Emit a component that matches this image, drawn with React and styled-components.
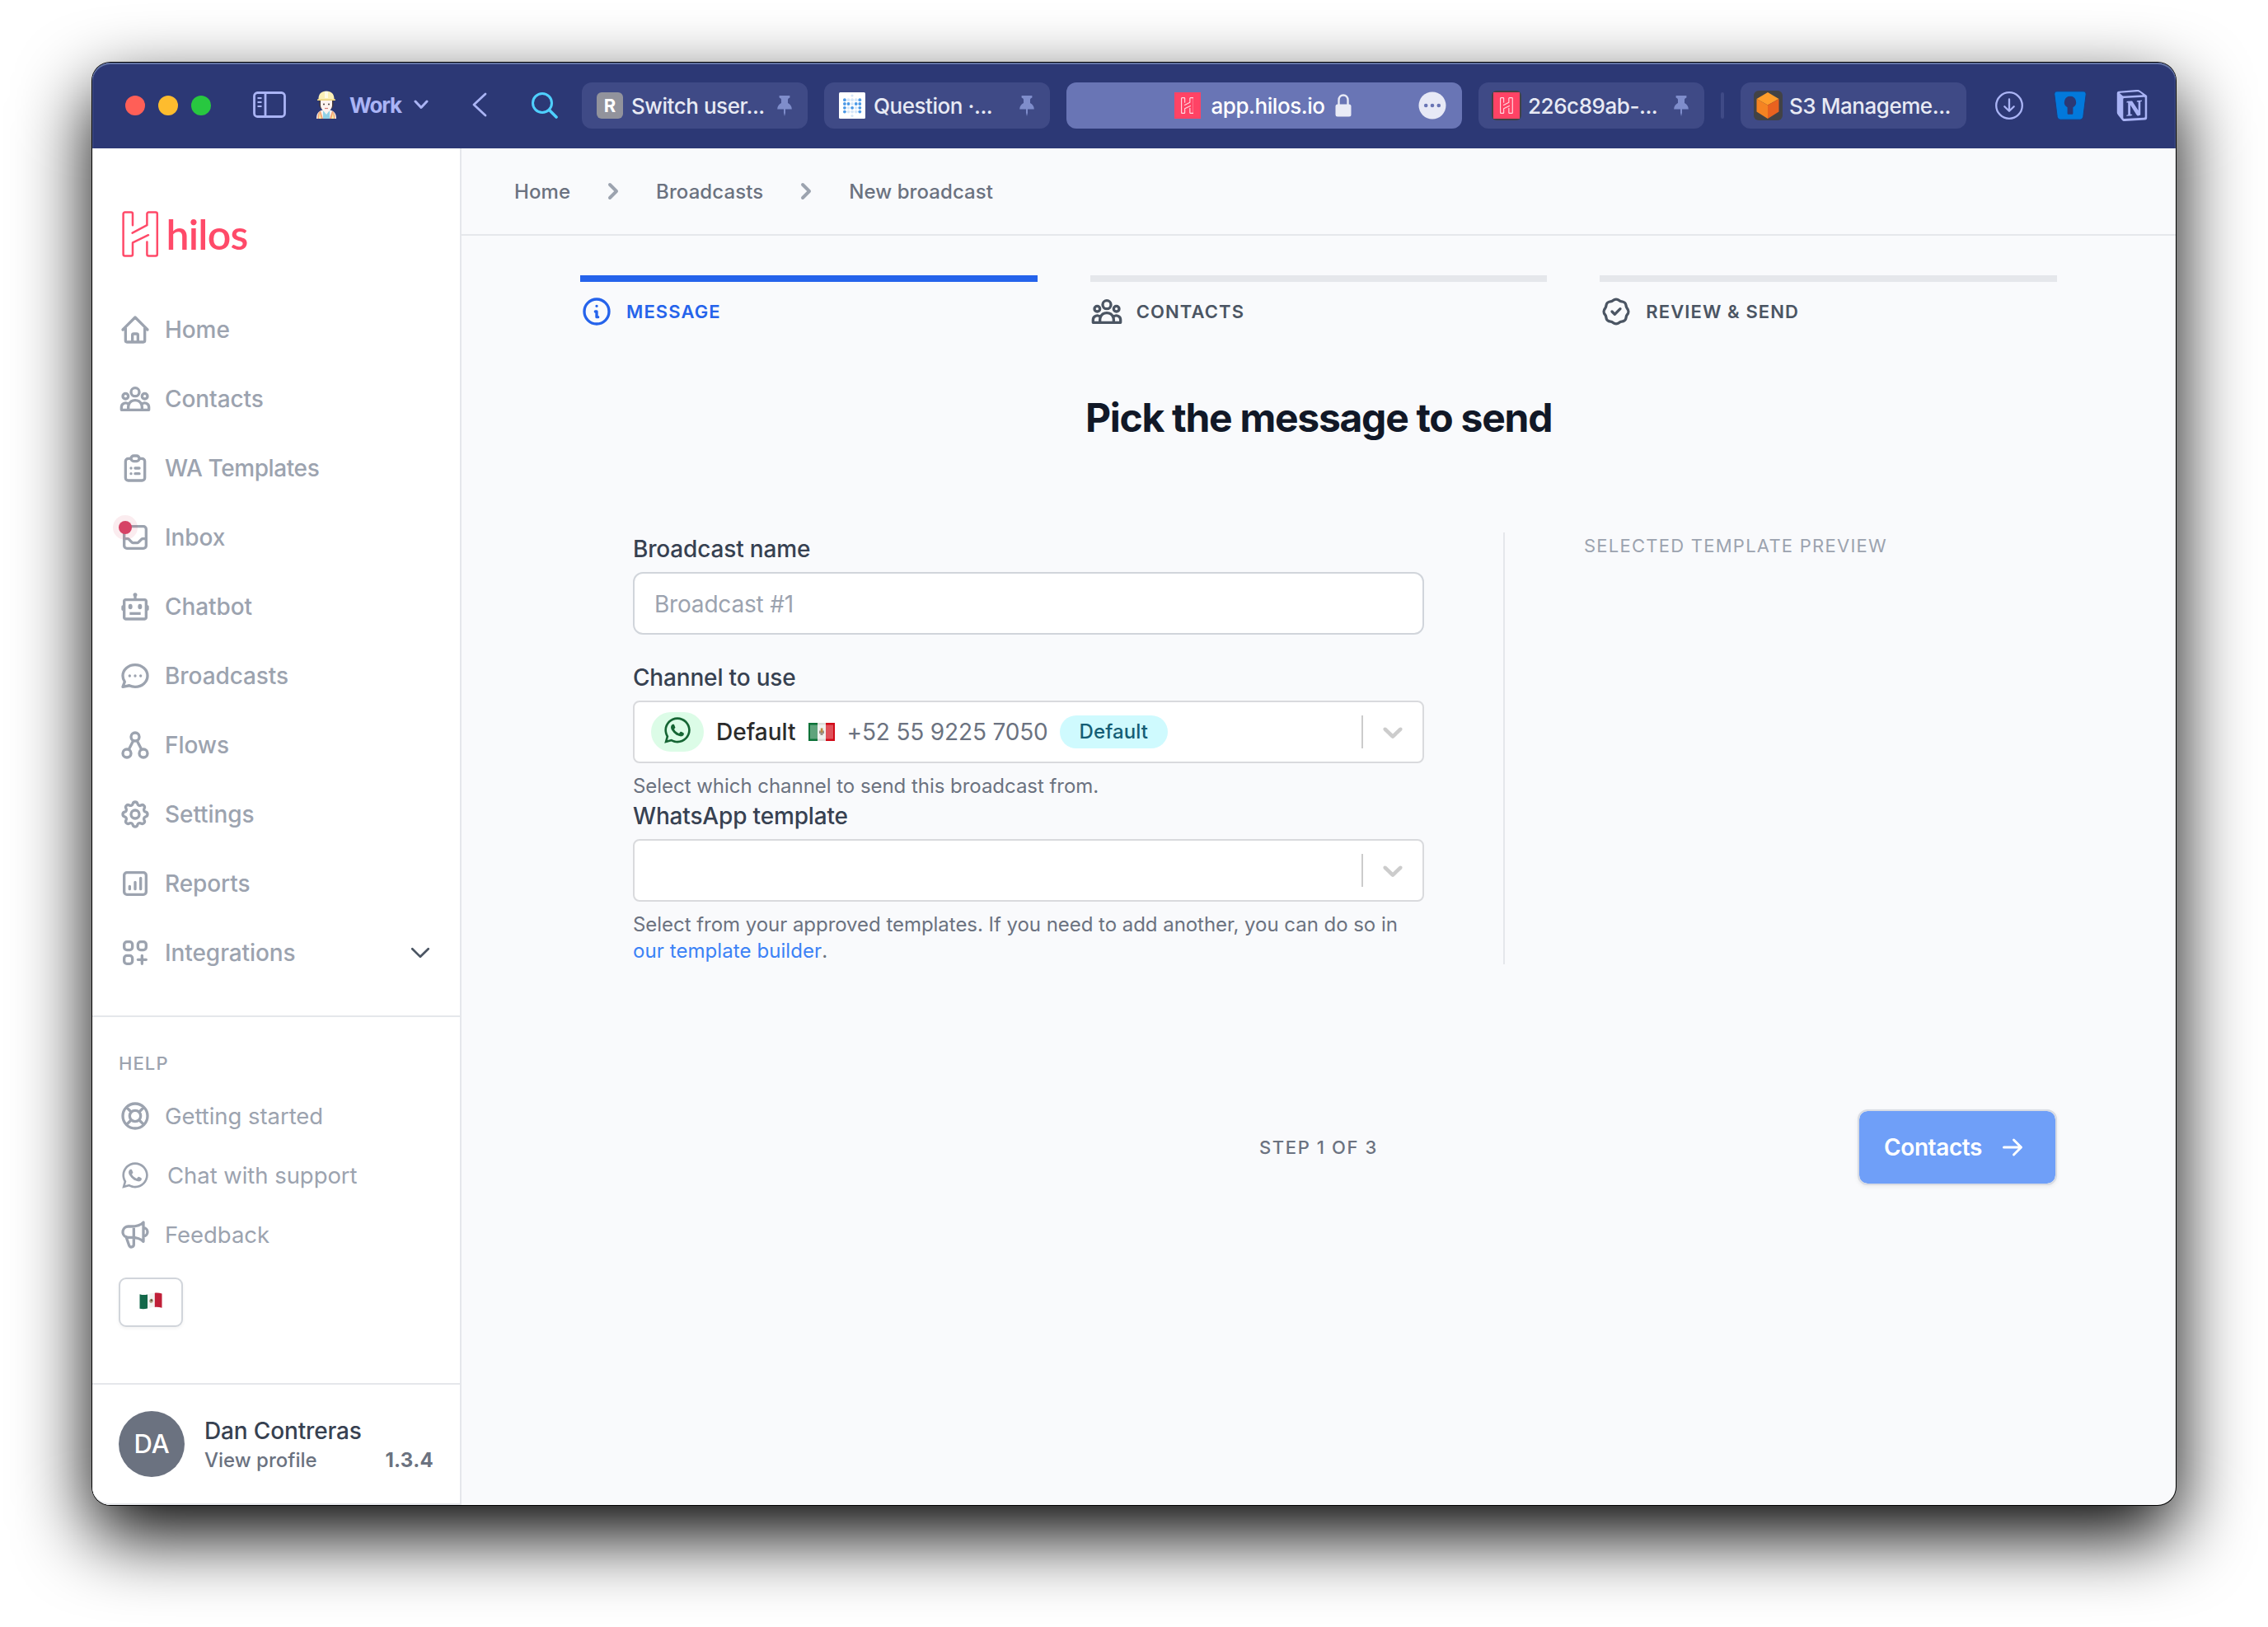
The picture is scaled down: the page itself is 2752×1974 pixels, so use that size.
import React from 'react';
import styled, { createGlobalStyle } from 'styled-components';
import {
  HiOutlineHome, HiOutlineUserGroup, HiOutlineClipboardList, HiOutlineInbox, HiOutlineChat,
  HiOutlineCog, HiOutlineChartSquareBar, HiOutlineViewGridAdd, HiOutlineSupport,
  HiOutlineSpeakerphone, HiOutlineInformationCircle, HiOutlineBadgeCheck,
  HiChevronRight, HiArrowRight,
} from 'react-icons/hi';
import { BiBot } from 'react-icons/bi';
import { FaWhatsapp } from 'react-icons/fa';
import { SiNotion } from 'react-icons/si';


/* ---------- icons ---------- */

const HilosMark = ({ stroke = 2.5, ...rest }) => (
  <svg viewBox="0 0 44.5 56" fill="none" stroke="currentColor" strokeWidth={stroke} strokeLinecap="round" strokeLinejoin="round" {...rest}>
    <path d="M13 17.2V3.6a2 2 0 0 0-2-2H3.6a2 2 0 0 0-2 2v48.8a2 2 0 0 0 2 2H11a2 2 0 0 0 2-2V38.4l19-9.2" />
    <path d="M30.4 37.4v15a2 2 0 0 0 2 2h8.4a2 2 0 0 0 2-2V3.6a2 2 0 0 0-2-2h-8.4a2 2 0 0 0-2 2v13.6L12.6 26.6" />
  </svg>
);

const FlowsIcon = () => (
  <svg width="1em" height="1em" viewBox="0 0 24 24" fill="none" stroke="currentColor" strokeWidth="2">
    <circle cx="12" cy="6" r="3" />
    <circle cx="6" cy="18" r="3" />
    <circle cx="18" cy="18" r="3" />
    <path d="M10.6 8.8L7.4 15.2M13.4 8.8l3.2 6.4" />
  </svg>
);

const Pin = () => (
  <svg width="18" height="25" viewBox="0 0 18 25" fill="#7f8dcb">
    <path d="M2.6 0h12.8v2.4c-1.4.6-2.4 1.2-2.4 2.6v4c2.8 1.4 4.8 4 4.8 7.4H.2C.2 13 2.2 10.4 5 9V5c0-1.400-1-2-2.400-2.600z" />
    <path d="M8 16h2v5l-1 4-1-4z" />
  </svg>
);

const SidebarIcon = () => (
  <svg width="40" height="32" viewBox="0 0 40 32" fill="none" stroke="#aab4f5" strokeWidth="2.8">
    <rect x="1.500" y="1.500" width="37" height="29" rx="4" />
    <path d="M15 1.500v29" />
    <path d="M5.500 8h5M5.500 13h5M5.500 18h5" strokeWidth="2" />
  </svg>
);

const Worker = () => (
  <svg width="26" height="34" viewBox="0 0 26 34">
    <path d="M1 34c0-7 3-11 12-11s12 4 12 11z" fill="#f4f1ee" />
    <path d="M2.500 34c0-5 .8-8 3.500-9.500l3 9.500zM23.500 34c0-5-.8-8-3.500-9.500L17 34z" fill="#f5a376" />
    <path d="M4 34l.8-8 2 8zM22 34l-.8-8-2 8z" fill="#f9efa0" />
    <path d="M9 24l4 5 4-5v10H9z" fill="#8fd0e6" />
    <path d="M4.500 11h17v6c0 2-1 4-2.500 5H7c-1.500-1-2.500-3-2.500-5z" fill="#493a38" />
    <path d="M6 11h14v6.500c0 4.500-3.500 8-7 8s-7-3.500-7-8z" fill="#fdf3f0" />
    <circle cx="10" cy="16.500" r="1" fill="#4a3b38" />
    <circle cx="16" cy="16.500" r="1" fill="#4a3b38" />
    <path d="M11 21.500h4" stroke="#d77d76" strokeWidth="1.200" />
    <path d="M3.500 10C3.500 4 7 .5 13 .5S22.500 4 22.500 10l1.500 2H2z" fill="#fbefb6" />
    <path d="M11 1h4v8h-4z" fill="#fffbe6" />
    <path d="M2 11.200h22" stroke="#ecd27c" strokeWidth="1.600" />
  </svg>
);

const dots = [
  [1, 0, 0, 0, 1],
  [1, 1, 0, 1, 1],
  [1, 0, 1, 0, 1],
  [1, 0, 0, 0, 1],
];

const MetabaseIcon = () => (
  <svg width="32" height="32" viewBox="0 0 32 32">
    <rect width="32" height="32" rx="1.500" fill="#fff" />
    <circle cx="16" cy="4" r="1.600" fill="#d5e6f8" />
    <circle cx="16" cy="28.500" r="1.600" fill="#d5e6f8" />
    {dots.map((row, y) => row.map((on, x) => (
      <circle key={`${x}${y}`} cx={6.9 + x * 4.6} cy={9.2 + y * 4.8} r="1.900" fill={on ? '#4c99e6' : '#d5e6f8'} />
    )))}
  </svg>
);

const CubeIcon = () => (
  <svg width="28" height="32" viewBox="0 0 28 32">
    <path d="M14 0l13.500 8L14 15.500.5 8z" fill="#ff9d2b" />
    <path d="M.5 8L14 15.500V32L.5 23.500z" fill="#f58322" />
    <path d="M27.500 8L14 15.500V32l13.500-8.500z" fill="#e9621f" />
  </svg>
);

const Lock = () => (
  <svg width="20" height="28" viewBox="0 0 20 28">
    <path d="M4.500 13V7.500C4.500 3.800 6.800 1.500 10 1.500s5.500 2.300 5.500 6V13" fill="none" stroke="#e9ebf6" strokeWidth="2.400" />
    <rect x=".5" y="12.500" width="19" height="15" rx="2.500" fill="#e9ebf6" />
  </svg>
);

const MoreIcon = () => (
  <svg width="34" height="34" viewBox="0 0 34 34">
    <circle cx="17" cy="17" r="16.500" fill="#e7e9f6" />
    <circle cx="9.200" cy="17" r="2.300" fill="#6975b5" />
    <circle cx="17" cy="17" r="2.300" fill="#6975b5" />
    <circle cx="24.800" cy="17" r="2.300" fill="#6975b5" />
  </svg>
);

const DownloadIcon = () => (
  <svg width="34" height="34" viewBox="0 0 34 34" fill="none" stroke="#aab4f5" strokeWidth="2.300" strokeLinecap="round" strokeLinejoin="round">
    <circle cx="17" cy="17" r="15.800" />
    <path d="M17 9.500v14M11.300 18.200l5.700 5.600 5.700-5.600" />
  </svg>
);

const VaultIcon = () => (
  <svg width="40" height="36" viewBox="0 0 40 36">
    <path d="M4 .8h32c2 0 3.400 1.600 3.200 3.600l-3.400 27c-.3 2.200-2 3.800-4.200 3.800H8.400c-2.200 0-3.900-1.600-4.200-3.800L.8 4.400C.6 2.400 2 .8 4 .8z" fill="#0279dc" stroke="#1f3b7c" />
    <path d="M20 6.800a7.200 7.200 0 0 1 3.400 13.500v7.200c0 .8-.5 1.300-1.300 1.300h-4.200c-.8 0-1.300-.5-1.300-1.300v-7.200A7.200 7.200 0 0 1 20 6.800z" fill="#2c3875" />
  </svg>
);

const MexicoFlag = () => (
  <svg width="28" height="21" viewBox="0 0 28 21">
    <path d="M.5 2.200c3.500 1 6 1.200 9.500.2v17c-3.500 1-6 1-9.500.4z" fill="#13684a" />
    <path d="M10 2.400C13 1.500 15.500.8 18.800.7v17.200c-3.300 0-5.800.7-8.800 1.500z" fill="#f3f3f2" />
    <path d="M18.800.7c3.200-.3 5.700 0 8.700.8v17.300c-3-.9-5.500-1.100-8.700-.9z" fill="#c01f38" />
    <path d="M12.200 10.500c.2-2 1.800-3.300 3.600-2.600 1.400.8 1.300 3.600-.2 4.600-1.400.7-3.200.2-3.400-2z" fill="#a89a78" />
    <circle cx="14.800" cy="9.500" r="1.100" fill="#4d3b25" />
  </svg>
);

const FlatFlag = () => (
  <svg width="34" height="24" viewBox="0 0 34 24">
    <path d="M1 1h11v22H1z" fill="#0d7238" />
    <path d="M3 3.500h9v17H3z" fill="#5fa37c" />
    <path d="M12 1h10v22H12z" fill="#dcdcda" />
    <path d="M12 3.500h10v17H12z" fill="#f0f0ee" />
    <path d="M22 1h11v22H22z" fill="#d10a18" />
    <path d="M22 3.500h9v17h-9z" fill="#e0515a" />
    <path d="M14 10.500h6v3.500h-1.500V16h-3v-2H14z" fill="#9b8f86" />
    <path d="M15.800 7.500h2.600v5h-2.600z" fill="#b98a3d" />
  </svg>
);

const SelectChevron = () => (
  <svg width="40" height="40" viewBox="0 0 20 20" fill="#ccc">
    <path d="M4.516 7.548c0.436-0.446 1.043-0.481 1.576 0l3.908 3.747 3.908-3.747c0.533-0.481 1.141-0.446 1.574 0 0.436 0.445 0.408 1.197 0 1.615-0.406 0.418-4.695 4.502-4.695 4.502-0.217 0.223-0.502 0.335-0.787 0.335s-0.570-0.112-0.789-0.335c0 0-4.287-4.084-4.695-4.502s-0.436-1.170 0-1.615z" />
  </svg>
);


/* ---------- data ---------- */

const navItems = [
  { label: 'Home', icon: HiOutlineHome },
  { label: 'Contacts', icon: HiOutlineUserGroup },
  { label: 'WA Templates', icon: HiOutlineClipboardList, tight: true },
  { label: 'Inbox', icon: HiOutlineInbox, unread: true },
  { label: 'Chatbot', icon: BiBot },
  { label: 'Broadcasts', icon: HiOutlineChat },
  { label: 'Flows', icon: FlowsIcon },
  { label: 'Settings', icon: HiOutlineCog },
  { label: 'Reports', icon: HiOutlineChartSquareBar },
  { label: 'Integrations', icon: HiOutlineViewGridAdd, open: true },
];

const steps = [
  { label: 'Message', icon: HiOutlineInformationCircle, active: true },
  { label: 'Contacts', icon: HiOutlineUserGroup },
  { label: 'Review & Send', icon: HiOutlineBadgeCheck },
];


const App = () => {
  return (
    <Desktop>
      <GlobalStyle />
      <Window>
        <Toolbar>
          <Lights>
            <Light color="#ff5f57" />
            <Light color="#febc2e" />
            <Light color="#28c840" />
          </Lights>
          <SidebarToggle><SidebarIcon /></SidebarToggle>
          <Workspace>
            <Worker />
            <span>Work</span>
            <svg width="18" height="12" viewBox="0 0 18 12" fill="none" stroke="#aab4f5" strokeWidth="3" strokeLinecap="round" strokeLinejoin="round">
              <path d="M2 2l7 7.500L16 2" />
            </svg>
          </Workspace>
          <BackButton>
            <svg width="18" height="30" viewBox="0 0 18 30" fill="none" stroke="#aab4f5" strokeWidth="2.800" strokeLinecap="round" strokeLinejoin="round">
              <path d="M16 2L2 15l14 13" />
            </svg>
          </BackButton>
          <SearchButton>
            <svg width="32" height="32" viewBox="0 0 32 32" fill="none" stroke="#4fd0ff" strokeWidth="3" strokeLinecap="round">
              <circle cx="13" cy="13" r="11.500" />
              <path d="M21.500 21.500L30 30" strokeWidth="3.600" />
            </svg>
          </SearchButton>

          <Tabs>
            <Tab>
              <LetterIcon>R</LetterIcon>
              <TabTitle>Switch user...</TabTitle>
              <Pin />
            </Tab>
            <Tab>
              <MetabaseIcon />
              <TabTitle>Question ·...</TabTitle>
              <Pin />
            </Tab>
            <ActiveTab>
              <Address>
                <HilosFavicon><HilosMark stroke={3.2} /></HilosFavicon>
                <span>app.hilos.io</span>
                <Lock />
              </Address>
              <MoreIcon />
            </ActiveTab>
            <Tab>
              <IconBacking><HilosFavicon><HilosMark stroke={3.2} /></HilosFavicon></IconBacking>
              <TabTitle>226c89ab-...</TabTitle>
              <Pin />
            </Tab>
            <TabDivider />
            <Tab>
              <IconBacking><CubeIcon /></IconBacking>
              <TabTitle>S3 Manageme...</TabTitle>
            </Tab>
          </Tabs>

          <Extensions>
            <DownloadIcon />
            <VaultIcon />
            <SiNotion size={38} color="#aab4f5" />
          </Extensions>
        </Toolbar>

        <Page>
          <Sidebar>
            <Logo>
              <HilosMark width="44.500" height="56" />
              <span>hilos</span>
            </Logo>

            <Nav>
              {navItems.map(({ label, icon: Icon, unread, open, tight }) => (
                <NavItem key={label} $tight={tight}>
                  <NavIcon><Icon />{unread && <UnreadDot />}</NavIcon>
                  <span>{label}</span>
                  {open && (
                    <svg width="24" height="16" viewBox="0 0 24 16" fill="none" stroke="#4b5563" strokeWidth="2.700" strokeLinecap="round" strokeLinejoin="round">
                      <path d="M2.300 3.300L12 12.800l9.700-9.500" />
                    </svg>
                  )}
                </NavItem>
              ))}
            </Nav>

            <Help>
              <Overline>Help</Overline>
              <HelpItem><NavIcon><HiOutlineSupport /></NavIcon>Getting started</HelpItem>
              <HelpItem $wide><NavIcon $small><FaWhatsapp /></NavIcon>Chat with support</HelpItem>
              <HelpItem><NavIcon><HiOutlineSpeakerphone /></NavIcon>Feedback</HelpItem>
              <LanguageButton><MexicoFlag /></LanguageButton>
            </Help>

            <Profile>
              <Avatar>DA</Avatar>
              <ProfileText>
                <h4>Dan Contreras</h4>
                <ProfileMeta>
                  <span>View profile</span>
                  <b>1.3.4</b>
                </ProfileMeta>
              </ProfileText>
            </Profile>
          </Sidebar>

          <Main>
            <Breadcrumbs>
              <span>Home</span>
              <HiChevronRight />
              <span>Broadcasts</span>
              <HiChevronRight />
              <span>New broadcast</span>
            </Breadcrumbs>

            <Content>
              <Stepper>
                {steps.map(({ label, icon: Icon, active }) => (
                  <Step key={label} $active={active}>
                    <Icon />
                    <span>{label}</span>
                  </Step>
                ))}
              </Stepper>

              <Title>Pick the message to send</Title>

              <Columns>
                <Form>
                  <Label>Broadcast name</Label>
                  <Input placeholder="Broadcast #1" />

                  <Label $spaced>Channel to use</Label>
                  <Select>
                    <SelectValue>
                      <WhatsappPill><FaWhatsapp /></WhatsappPill>
                      <ChannelName>Default</ChannelName>
                      <FlatFlag />
                      <Phone>+52 55 9225 7050</Phone>
                      <Badge>Default</Badge>
                    </SelectValue>
                    <Indicator><SelectChevron /></Indicator>
                  </Select>
                  <Hint>Select which channel to send this broadcast from.</Hint>

                  <Label>WhatsApp template</Label>
                  <Select>
                    <SelectValue />
                    <Indicator><SelectChevron /></Indicator>
                  </Select>
                  <Hint>
                    Select from your approved templates. If you need to add another, you can do so in<br />
                    <a>our template builder</a>.
                  </Hint>
                </Form>
                <Preview>
                  <Overline $preview>Selected template preview</Overline>
                </Preview>
              </Columns>

              <Footer>
                <StepCount>Step 1 of 3</StepCount>
                <NextButton>Contacts <HiArrowRight /></NextButton>
              </Footer>
            </Content>
          </Main>
        </Page>
      </Window>
    </Desktop>
  );
};

export default App;


const GlobalStyle = createGlobalStyle`
  * {
    box-sizing: border-box;
  }

  body {
    margin: 0;
    background: #fff;
    font-family: Inter, "Liberation Sans", sans-serif;
    font-size: 28px;
    color: #374151;
  }

  h1, h4, p {
    margin: 0;
  }

  svg {
    flex-shrink: 0;
    display: block;
  }
`;

const Desktop = styled.div`
  width: 2752px;
  height: 1974px;
  padding: 76px 112px;
  overflow: hidden;
`;

const Window = styled.div`
  display: flex;
  flex-direction: column;
  height: 1750px;
  border-radius: 22px;
  background: #f9fafc;
  box-shadow: 0 0 0 1px #000, 0 36px 90px #000;
`;

const Toolbar = styled.header`
  display: flex;
  align-items: center;
  height: 104px;
  padding: 0 34px 0 40px;
  border-radius: 22px 22px 0 0;
  background: #2c3875;
  box-shadow: inset 0 2px 0 #6374a5, inset 1px 0 0 #4f5c94, inset -1px 0 0 #4f5c94;
`;

const Lights = styled.div`
  display: flex;
  gap: 16px;
`;

const Light = styled.i`
  width: 24px;
  height: 24px;
  border-radius: 50%;
  background: ${(props) => props.color};
`;

const SidebarToggle = styled.div`
  margin-left: 51px;
  padding-bottom: 2px;
`;

const Workspace = styled.div`
  display: flex;
  align-items: center;
  margin-left: 36px;
  padding-bottom: 2px;
  width: 137px;
  justify-content: space-between;
  font-size: 26px;
  font-weight: 700;
  letter-spacing: -1.2px;
  color: #aab4f5;
`;

const BackButton = styled.div`
  margin-left: 53px;
  padding-bottom: 2px;
`;

const SearchButton = styled.div`
  margin-left: 54px;
`;

const Tabs = styled.div`
  display: flex;
  align-items: center;
  gap: 20px;
  margin-left: 29px;
`;

const Tab = styled.div`
  display: flex;
  align-items: center;
  width: 274px;
  height: 56px;
  padding: 0 19px 0 18px;
  border-radius: 12px;
  background: #3f4a86;
  color: #e8eaf4;
`;

const TabTitle = styled.span`
  flex: 1;
  padding-left: 10px;
  font-size: 26px;
  font-weight: 500;
  letter-spacing: -0.45px;
  white-space: nowrap;
`;

const ActiveTab = styled(Tab)`
  width: 480px;
  padding-right: 19px;
  background: #6975b5;
  color: #fff;
`;

const Address = styled.div`
  flex: 1;
  display: flex;
  align-items: center;
  justify-content: center;
  gap: 13px;
  padding-left: 32px;
  font-size: 26px;
  font-weight: 500;
  letter-spacing: -0.45px;
`;

const LetterIcon = styled.div`
  width: 32px;
  height: 32px;
  border-radius: 6px;
  background: #92939c;
  color: #fff;
  font-size: 22px;
  font-weight: 700;
  line-height: 32px;
  text-align: center;
`;

const HilosFavicon = styled.div`
  display: grid;
  place-items: center;
  width: 32px;
  height: 32px;
  background: #ff4365;
  color: #ffdbe1;

  svg {
    height: 20px;
  }
`;

const IconBacking = styled.div`
  display: grid;
  place-items: center;
  width: 36px;
  height: 36px;
  margin: 0 -2px;
  border-radius: 6px;
  background: #424245;
`;

const TabDivider = styled.div`
  width: 4px;
  height: 32px;
  border-radius: 2px;
  background: #3f4a86;
`;

const Extensions = styled.div`
  flex: 1;
  display: flex;
  align-items: center;
  justify-content: space-between;
  margin-left: 35px;
  padding-bottom: 1px;
`;

const Page = styled.div`
  flex: 1;
  display: flex;
`;

const Sidebar = styled.aside`
  display: flex;
  flex-direction: column;
  width: 448px;
  border-right: 2px solid #e5e7eb;
  border-radius: 0 0 0 22px;
  background: #fff;
`;

const Logo = styled.div`
  display: flex;
  height: 178px;
  padding: 76px 0 0 36px;
  color: #ff4a69;

  span {
    margin-left: 9px;
    font-family: Lato, sans-serif;
    font-size: 50px;
    font-weight: 600;
    line-height: 57px;
    letter-spacing: -0.8px;
  }
`;

const Nav = styled.nav`
  padding-bottom: 34px;
  border-bottom: 2px solid #e5e7eb;
`;

const NavItem = styled.div`
  display: flex;
  align-items: center;
  gap: 16px;
  height: 84px;
  padding: 0 36px 0 32px;
  font-weight: 500;
  letter-spacing: ${(props) => (props.$tight ? '-0.4px' : '-0.08px')};
  color: #9ca3af;

  span {
    flex: 1;
  }
`;

const NavIcon = styled.div`
  position: relative;
  display: flex;
  justify-content: center;
  width: 40px;
  font-size: ${(props) => (props.$small ? '36px' : '40px')};
`;

const UnreadDot = styled.i`
  position: absolute;
  top: 0;
  left: 0;
  width: 16px;
  height: 16px;
  border-radius: 50%;
  background: #d64265;
  box-shadow: 0 0 0 7px rgba(214, 66, 101, 0.1);
`;

const Help = styled.section`
  padding: 40px 32px 0;
`;

const Overline = styled.h4`
  margin-bottom: 12px;
  font-size: 22px;
  font-weight: ${(props) => (props.$preview ? 400 : 500)};
  line-height: 32px;
  letter-spacing: ${(props) => (props.$preview ? '1.25px' : '1.1px')};
  text-transform: uppercase;
  color: #9ca3af;
`;

const HelpItem = styled.div`
  display: flex;
  align-items: center;
  gap: ${(props) => (props.$wide ? '19px' : '16px')};
  height: 72px;
  font-size: 27.5px;
  letter-spacing: -0.05px;
  color: #9ca3af;
`;

const LanguageButton = styled.button`
  display: flex;
  justify-content: center;
  width: 78px;
  height: 60px;
  margin-top: 16px;
  padding: 16px 0 0;
  border: 2px solid #d1d5db;
  border-radius: 9px;
  background: #fff;
  box-shadow: 0 2px 4px rgba(0, 0, 0, 0.05);
`;

const Profile = styled.div`
  display: flex;
  align-items: center;
  gap: 24px;
  height: 148px;
  margin-top: auto;
  padding: 0 32px;
  border-top: 2px solid #e5e7eb;
  border-bottom: 2px solid #e5e7eb;
  border-radius: 0 0 0 22px;
`;

const Avatar = styled.div`
  width: 80px;
  height: 80px;
  border-radius: 50%;
  background: #6b7280;
  color: #fff;
  font-size: 31px;
  font-weight: 500;
  line-height: 80px;
  text-align: center;
`;

const ProfileText = styled.div`
  flex: 1;

  h4 {
    font-size: 28px;
    font-weight: 500;
    line-height: 40px;
    letter-spacing: -0.15px;
  }
`;

const ProfileMeta = styled.div`
  display: flex;
  justify-content: space-between;
  font-size: 24px;
  font-weight: 500;
  line-height: 32px;
  color: #6b7280;

  b {
    letter-spacing: 0.3px;
  }
`;

const Main = styled.main`
  flex: 1;
`;

const Breadcrumbs = styled.div`
  display: flex;
  align-items: center;
  gap: 32px;
  height: 106px;
  padding: 0 64px;
  border-bottom: 2px solid #e5e7eb;
  font-size: 24px;
  font-weight: 500;
  letter-spacing: 0.08px;
  color: #6b7280;

  svg {
    font-size: 40px;
    color: #9ca3af;
  }
`;

const Content = styled.div`
  padding: 48px 144px 0;
`;

const Stepper = styled.div`
  display: grid;
  grid-template-columns: repeat(3, 1fr);
  gap: 64px;
`;

const Step = styled.div`
  display: flex;
  align-items: center;
  gap: 16px;
  padding-top: 16px;
  border-top: 8px solid ${(props) => (props.$active ? '#2563eb' : '#e5e7eb')};
  color: ${(props) => (props.$active ? '#2563eb' : '#4b5563')};
  font-size: 22px;
  font-weight: 600;
  letter-spacing: 1.1px;
  text-transform: uppercase;

  svg {
    font-size: 40px;
  }
`;

const Title = styled.h1`
  margin: 81px 0 111px;
  color: #111827;
  font-size: 48px;
  font-weight: 700;
  line-height: 56px;
  letter-spacing: -1.28px;
  text-align: center;
`;

const Columns = styled.div`
  display: flex;
  padding-left: 64px;
`;

const Form = styled.div`
  width: 1056px;
  padding-right: 96px;
`;

const Preview = styled.div`
  flex: 1;
  padding-left: 96px;
  border-left: 2px solid #e5e7eb;
`;

const Label = styled.label`
  display: block;
  margin: ${(props) => (props.$spaced ? '32px' : '0')} 0 8px;
  font-weight: 500;
  line-height: 40px;
  letter-spacing: -0.17px;
`;

const Input = styled.input`
  display: block;
  width: 100%;
  height: 76px;
  padding: 2px 24px 0;
  border: 2px solid #d1d5db;
  border-radius: 12px;
  background: #fff;
  font-family: inherit;
  font-size: 28px;
  letter-spacing: -0.2px;

  &::placeholder {
    color: #9ca3af;
  }
`;

const Select = styled.div`
  display: flex;
  align-items: center;
  height: 76px;
  border: 2px solid #d9dadd;
  border-radius: 8px;
  background: #fff;
`;

const SelectValue = styled.div`
  flex: 1;
  display: flex;
  align-items: center;
  gap: 14px;
  padding-left: 20px;
`;

const WhatsappPill = styled.div`
  display: flex;
  align-items: center;
  justify-content: center;
  width: 64px;
  height: 48px;
  padding-bottom: 4px;
  border-radius: 24px;
  background: #dcfce7;
  color: #166534;
  font-size: 36px;
`;

const ChannelName = styled.span`
  padding-left: 1px;
  font-weight: 500;
  color: #2b2b2b;
`;

const Phone = styled.span`
  color: #6b7280;
  letter-spacing: -0.16px;
`;

const Badge = styled.span`
  padding: 0 24px;
  border-radius: 20px;
  background: #cffafe;
  color: #155e75;
  font-size: 24px;
  font-weight: 500;
  line-height: 40px;
  letter-spacing: 0.1px;
`;

const Indicator = styled.div`
  display: flex;
  align-items: center;
  justify-content: center;
  width: 74px;
  height: 40px;
  border-left: 2px solid #ccc;
`;

const Hint = styled.p`
  margin-top: 12px;
  color: #6b7280;
  font-size: 24px;
  line-height: 32px;
  letter-spacing: -0.04px;

  a {
    color: #3b82f6;
    letter-spacing: 0.08px;
  }
`;

const Footer = styled.div`
  display: grid;
  grid-template-columns: 1fr auto 1fr;
  align-items: center;
  margin-top: 176px;
`;

const StepCount = styled.span`
  grid-column: 2;
  color: #6b7280;
  font-size: 22px;
  font-weight: 500;
  letter-spacing: 1.6px;
  text-transform: uppercase;
`;

const NextButton = styled.button`
  display: flex;
  align-items: center;
  justify-content: space-between;
  justify-self: end;
  width: 242px;
  height: 92px;
  padding: 0 37px 0 30px;
  border: 2px solid #d9dce3;
  border-radius: 12px;
  background: #6f9ff8;
  background-clip: padding-box;
  box-shadow: 0 2px 5px rgba(0, 0, 0, 0.06);
  color: #fff;
  font-family: inherit;
  font-size: 28px;
  font-weight: 600;
  letter-spacing: -0.4px;

  svg {
    font-size: 30px;
  }
`;
